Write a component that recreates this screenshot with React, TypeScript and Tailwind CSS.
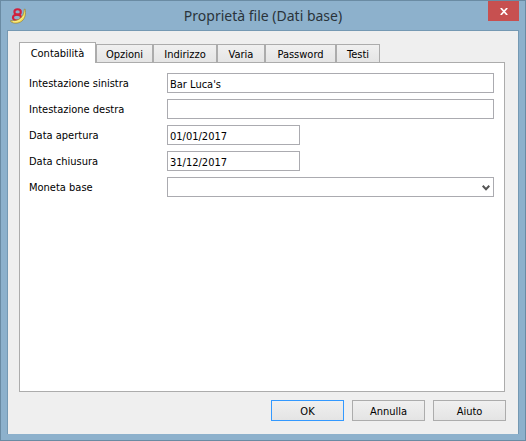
import { useState } from "react";

const tabs = [
  { name: "Contabilità", width: "w-[77px]" },
  { name: "Opzioni", width: "w-[57px]" },
  { name: "Indirizzo", width: "w-[64px]" },
  { name: "Varia", width: "w-[48px]" },
  { name: "Password", width: "w-[71px]" },
  { name: "Testi", width: "w-[44px]" },
];

const fieldBox = "h-5 border border-[#ababb0] bg-white px-0.5 pt-0.5 outline-none";

function BananaLogo() {
  return (
    <svg viewBox="0 0 16 16" className="h-4 w-4" aria-hidden="true">
      <ellipse cx="7.6" cy="3.9" rx="3.2" ry="2.7" fill="none" stroke="#d0203c" strokeWidth="2.1" />
      <ellipse cx="7" cy="9.6" rx="4" ry="3" fill="none" stroke="#d0203c" strokeWidth="2.2" />
      <path
        d="M14.2 1.2 L15.2 1.2 C16.2 5.6 15.2 10.4 12 13 C8.6 15.8 3.6 16 .7 13.6 L.7 12.4 C5 13.4 9 12 11.6 9 C13.4 6.8 14.2 4 14.2 1.2Z"
        fill="#f3dc55"
        stroke="#8d7b3c"
        strokeWidth=".6"
      />
      <path d="M3 13.6 C7.6 14.2 11.4 12 13.6 8" fill="none" stroke="#fbf19a" strokeWidth=".9" />
    </svg>
  );
}

function TextField({ id, label, value, size }: { id: string; label: string; value: string; size: string }) {
  return (
    <div className="flex items-center">
      <label htmlFor={id} className="w-[138px] shrink-0 pt-0.5">
        {label}
      </label>
      <div className="flex min-w-0 flex-1">
        <input id={id} type="text" defaultValue={value} className={`${fieldBox} ${size}`} />
      </div>
    </div>
  );
}

function DialogButton({ label, border }: { label: string; border: string }) {
  return (
    <button
      type="button"
      className={`h-[21px] w-[73px] border bg-linear-to-b from-[#f0f0f0] to-[#e4e4e4] pt-0.5 ${border}`}
    >
      {label}
    </button>
  );
}

export default function App() {
  const [active, setActive] = useState("Contabilità");

  return (
    <div className="flex min-h-screen flex-col border border-[#6a8ba3] bg-[#8db1cc] font-['DejaVu_Sans_Condensed','DejaVu_Sans',sans-serif] text-[11px] leading-4 text-black">
      <header className="relative flex h-[29px] items-center pl-[9px]">
        <BananaLogo />
        <h1 className="flex-1 pr-[25px] text-center font-['Noto_Sans',sans-serif] text-[14px] leading-5 text-[#2a343b]">
          Proprietà file (Dati base)
        </h1>
        <button
          type="button"
          aria-label="Chiudi"
          className="absolute top-0 right-1.5 flex h-5 w-[31px] items-center justify-center bg-[#c75050]"
        >
          <svg viewBox="0 0 8 7" className="h-[7px] w-2" aria-hidden="true">
            <path d="M.8 0 L7.2 7 M7.2 0 L.8 7" stroke="#fff" strokeWidth="1.7" />
          </svg>
        </button>
      </header>

      <main className="mx-1.5 mb-1.5 flex flex-1 flex-col border border-b-0 border-[#7599b3] bg-[#efefef] pt-[11px] pr-3 pb-[13px] pl-[11px]">
        <div role="tablist" className="flex items-end">
          {tabs.map((tab) => (
            <button
              key={tab.name}
              type="button"
              role="tab"
              aria-selected={active === tab.name}
              onClick={() => setActive(tab.name)}
              className={`shrink-0 border border-b-0 border-[#acacac] pt-0.5 ${tab.width} ${
                active === tab.name
                  ? "relative -mb-px h-[21px] bg-white"
                  : "h-[18px] bg-linear-to-b from-[#f0f0f0] to-[#e5e5e5]"
              }`}
            >
              {tab.name}
            </button>
          ))}
        </div>

        <form className="mr-px flex flex-1 flex-col gap-1.5 border border-[#acacac] bg-white pt-2.5 pr-2.5 pl-[9px]">
          <TextField id="left" label="Intestazione sinistra" value="Bar Luca's" size="w-full" />
          <TextField id="right" label="Intestazione destra" value="" size="w-full" />
          <TextField id="start" label="Data apertura" value="01/01/2017" size="w-[133px]" />
          <TextField id="end" label="Data chiusura" value="31/12/2017" size="w-[133px]" />
          <div className="flex items-center">
            <label htmlFor="currency" className="w-[138px] shrink-0 pt-0.5">
              Moneta base
            </label>
            <div className="relative flex min-w-0 flex-1">
              <select id="currency" className={`w-full appearance-none ${fieldBox}`}>
                <option value=""></option>
              </select>
              <svg
                viewBox="0 0 8 6"
                className="pointer-events-none absolute top-2 right-1 h-1.5 w-2"
                aria-hidden="true"
              >
                <path d="M.7 .8 L4 4.2 L7.3 .8" fill="none" stroke="#555" strokeWidth="2.1" />
              </svg>
            </div>
          </div>
        </form>

        <div className="mt-2 flex justify-end gap-2">
          <DialogButton label="OK" border="border-[#3399ff]" />
          <DialogButton label="Annulla" border="border-[#acacac]" />
          <DialogButton label="Aiuto" border="border-[#acacac]" />
        </div>
      </main>
    </div>
  );
}
